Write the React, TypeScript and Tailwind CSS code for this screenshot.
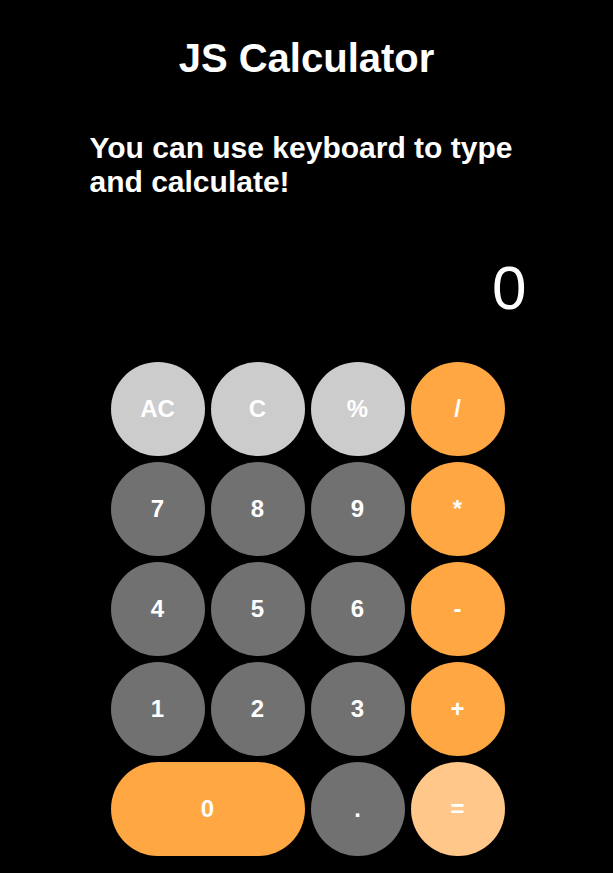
const keys = [
  { label: "AC", kind: "light" },
  { label: "C", kind: "light" },
  { label: "%", kind: "light" },
  { label: "/", kind: "op" },
  { label: "7", kind: "num" },
  { label: "8", kind: "num" },
  { label: "9", kind: "num" },
  { label: "*", kind: "op" },
  { label: "4", kind: "num" },
  { label: "5", kind: "num" },
  { label: "6", kind: "num" },
  { label: "-", kind: "op" },
  { label: "1", kind: "num" },
  { label: "2", kind: "num" },
  { label: "3", kind: "num" },
  { label: "+", kind: "op" },
  { label: "0", kind: "zero" },
  { label: ".", kind: "num" },
  { label: "=", kind: "eq" },
];

const styles: Record<string, string> = {
  light: "bg-[#cccccc]",
  num: "bg-[#717171]",
  op: "bg-[#fea743]",
  zero: "bg-[#fea743] col-span-2",
  eq: "bg-[#ffc88a]",
};

export default function App() {
  return (
    <div className="min-h-screen bg-black text-white font-['Liberation_Sans',Arial,sans-serif]">
      <div className="w-[434px] mx-auto pt-[35px] pb-4">
        <h1 className="text-center text-[40px] leading-[46px] font-bold">JS Calculator</h1>
        <p className="mt-[50px] text-[30px] leading-[34px] font-bold">
          You can use keyboard to type and calculate!
        </p>
        <div className="mt-[53px] -mr-[3px] text-right text-[62px] leading-[72px]">0</div>
        <div className="mt-[38px] ml-[21px] grid grid-cols-[repeat(4,94px)] auto-rows-[94px] gap-[6px]">
          {keys.map((k) => (
            <button
              key={k.label}
              className={`${styles[k.kind]} rounded-full text-white text-[24px] font-bold flex items-center justify-center`}
            >
              {k.label}
            </button>
          ))}
        </div>
      </div>
    </div>
  );
}
